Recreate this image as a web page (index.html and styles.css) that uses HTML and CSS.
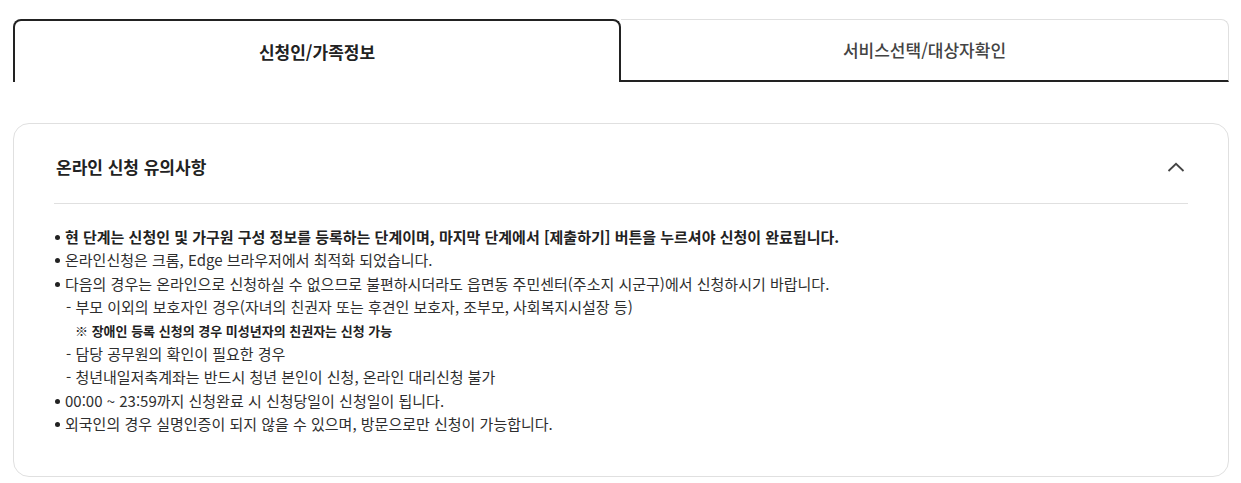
FILE: index.html
```html
<!DOCTYPE html>
<html lang="ko">
<head>
    <meta charset="UTF-8">
    <meta name="viewport" content="width=device-width, initial-scale=1.0">
    <title>온라인 신청</title>
    <link rel="stylesheet" href="styles.css">
</head>
<body>
    <div class="wrap">
        <!-- 단계 탭 -->
        <div class="tabs">
            <div class="tab active">신청인/가족정보</div>
            <div class="tab">서비스선택/대상자확인</div>
        </div>

        <!-- 유의사항 -->
        <div class="notice">
            <div class="notice-head">
                <h2>온라인 신청 유의사항</h2>
                <svg class="chevron" width="18" height="10" viewBox="0 0 18 10">
                    <path d="M1.5 9 L9 1.8 L16.5 9" fill="none" stroke="#444" stroke-width="1.8"/>
                </svg>
            </div>
            <ul class="notice-list">
                <li class="strong">현 단계는 신청인 및 가구원 구성 정보를 등록하는 단계이며, 마지막 단계에서 [제출하기] 버튼을 누르셔야 신청이 완료됩니다.</li>
                <li>온라인신청은 크롬, Edge 브라우저에서 최적화 되었습니다.</li>
                <li>다음의 경우는 온라인으로 신청하실 수 없으므로 불편하시더라도 읍면동 주민센터(주소지 시군구)에서 신청하시기 바랍니다.
                    <div class="sub">- 부모 이외의 보호자인 경우(자녀의 친권자 또는 후견인 보호자, 조부모, 사회복지시설장 등)</div>
                    <div class="sub note">※ 장애인 등록 신청의 경우 미성년자의 친권자는 신청 가능</div>
                    <div class="sub">- 담당 공무원의 확인이 필요한 경우</div>
                    <div class="sub">- 청년내일저축계좌는 반드시 청년 본인이 신청, 온라인 대리신청 불가</div>
                </li>
                <li>00:00 ~ 23:59까지 신청완료 시 신청당일이 신청일이 됩니다.</li>
                <li>외국인의 경우 실명인증이 되지 않을 수 있으며, 방문으로만 신청이 가능합니다.</li>
            </ul>
        </div>
    </div>
</body>
</html>
```

FILE: styles.css
```css
body {
    margin: 0;
    background: #fff;
    font-family: "Noto Sans CJK KR", "Noto Sans", sans-serif;
    color: #333;
}
.wrap {
    padding: 19px 12px 0 13px;
}
/* 단계 탭 */
.tabs {
    display: flex;
    height: 63px;
}
.tab {
    flex: 1;
    display: flex;
    align-items: center;
    justify-content: center;
    font-size: 17px;
    font-weight: 500;
    color: #444;
    box-sizing: border-box;
    border-top: 1px solid #e0e0e0;
    border-right: 1px solid #e0e0e0;
    border-bottom: 2px solid #222;
    border-radius: 0 8px 0 0;
    padding-bottom: 2px;
}
.tab.active {
    flex: 0 0 608px;
    font-weight: 700;
    color: #222;
    border: 2px solid #222;
    border-bottom: none;
    border-radius: 8px 8px 0 0;
    padding-bottom: 0;
}
/* 유의사항 박스 */
.notice {
    margin-top: 41px;
    border: 1px solid #e0e0e0;
    border-radius: 16px;
    padding: 0 40px 40px;
}
.notice-head {
    display: flex;
    justify-content: space-between;
    align-items: center;
    padding: 30px 0 24px;
    border-bottom: 1px solid #e0e0e0;
}
.notice-head h2 {
    margin: 0 0 0 2px;
    font-size: 17px;
    font-weight: 700;
    line-height: 25px;
    color: #222;
}
.chevron {
    margin-right: 3px;
}
.notice-list {
    list-style: none;
    margin: 21px 0 0;
    padding: 0;
    font-size: 15px;
    line-height: 23.4px;
    color: #2e2e2e;
}
.notice-list li {
    position: relative;
    padding-left: 11px;
}
.notice-list li::before {
    content: "";
    position: absolute;
    left: 1px;
    top: 10px;
    width: 5px;
    height: 5px;
    border-radius: 50%;
    background: #222;
}
.notice-list .strong {
    font-weight: 700;
    color: #222;
}
.sub {
    padding-left: 1px;
}
.sub.note {
    padding-left: 10px;
    font-size: 13px;
    font-weight: 700;
    color: #222;
}
```
